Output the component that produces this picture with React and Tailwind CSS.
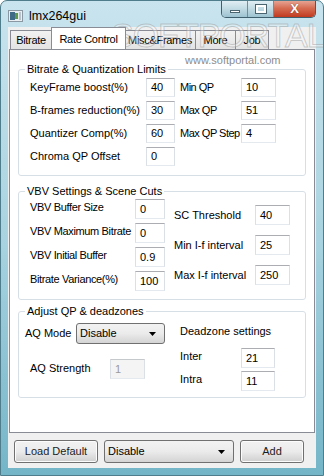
import React from 'react';

const font = { fontFamily: '"Liberation Sans", Arial, sans-serif' };

const Field = ({ value, w = 'w-[29px]', h = 'h-[19px]', disabled }) => (
  <div
    className={`${w} ${h} shrink-0 flex items-center pl-[4px] border border-[#abadb3] border-l-[#dbdfe6] border-r-[#dbdfe6] border-b-[#e3e9ef] ${
      disabled ? 'bg-[#f4f4f4] text-[#9a9a9a] border-[#c6c9cc]' : 'bg-white text-black'
    }`}
  >
    {value}
  </div>
);

const Combo = ({ value, w, h = 'h-[21px]' }) => (
  <div
    className={`${w} ${h} shrink-0 flex items-center justify-between pl-[3px] pr-[8px] rounded-[3px] border border-[#707070] bg-gradient-to-b from-[#f2f2f2] via-[#ebebeb] to-[#d4d4d4]`}
  >
    <span>{value}</span>
    <svg width="7" height="4" viewBox="0 0 7 4">
      <path d="M0 0h7L3.5 4z" fill="#000" />
    </svg>
  </div>
);

const Button = ({ children, w }) => (
  <div
    className={`${w} h-[23px] shrink-0 flex items-center justify-center rounded-[3px] border border-[#707070] bg-gradient-to-b from-[#f2f2f2] via-[#ebebeb] to-[#cfcfcf] text-[#1c1c1c] shadow-[inset_0_0_0_1px_#fcfcfc]`}
  >
    {children}
  </div>
);

const Group = ({ title, className, children }) => (
  <fieldset className={`border border-[#d5dfe5] rounded-[3px] ${className}`}>
    <legend className="ml-[6px] px-[2px] leading-[14px]">{title}</legend>
    {children}
  </fieldset>
);

export default function App() {
  const tabs = [
    ['Bitrate', 'w-[42px]'],
    ['Rate Control', 'w-[75px]'],
    ['Misc&Frames', 'w-[72px]'],
    ['More', 'w-[41px]'],
    ['Job', 'w-[34px]'],
  ];

  return (
    <div
      className="relative w-[324px] h-[476px] overflow-hidden rounded-t-[7px] bg-gradient-to-b from-[#c9e4ee] via-[#a9d3e0] to-[#74b5c8] border border-[#4f7d8b] text-[11px] text-black whitespace-nowrap"
      style={font}
    >
      {/* title bar */}
      <div className="h-[26px] flex items-start">
        <div className="flex items-center pl-[7px] pt-[8px]">
          <svg width="15" height="12" viewBox="0 0 15 12">
            <rect x="0.5" y="0.5" width="14" height="11" fill="#e8eef2" stroke="#8a98a4" />
            <rect x="2" y="2" width="5" height="8" fill="#3f6b86" />
            <rect x="7" y="3" width="3" height="6" fill="#5f9a4a" />
            <rect x="11" y="2" width="2" height="8" fill="#b8c4cc" />
          </svg>
          <span className="ml-[6px] text-[12.5px] leading-[14px]">lmx264gui</span>
        </div>
        <div className="ml-auto mr-[7px] flex h-[18px] -mt-px rounded-b-[5px] border border-t-0 border-[#3f5f6e] overflow-hidden">
          <div className="w-[26px] flex items-center justify-center bg-gradient-to-b from-[#e4f1f5] via-[#c2dbe4] to-[#9cc3d1] border-r border-[#6f8f9c]">
            <div className="w-[10px] h-[3px] mt-[5px] bg-white border border-[#4a6470]" />
          </div>
          <div className="w-[26px] flex items-center justify-center bg-gradient-to-b from-[#e4f1f5] via-[#c2dbe4] to-[#9cc3d1] border-r border-[#6f8f9c]">
            <div className="w-[10px] h-[8px] border-2 border-white outline outline-1 outline-[#4a6470]" />
          </div>
          <div className="w-[41px] flex items-center justify-center bg-gradient-to-b from-[#e7aa9a] via-[#d46a50] to-[#c0391e]">
            <span className="text-white font-bold text-[13px] leading-none [text-shadow:0_0_1px_#5a1a0c]">X</span>
          </div>
        </div>
      </div>

      {/* client area */}
      <div className="mx-[7px] h-[441px] bg-[#f0f0f0] flex flex-col">
        <div className="h-[22px] flex items-end pl-[2px] tracking-[-0.3px]">
          {tabs.map(([t, w], i) =>
            i === 1 ? (
              <div
                key={t}
                className={`${w} h-[22px] -mx-px relative z-10 flex justify-center items-start pt-[3px] bg-white border border-b-0 border-[#898c95]`}
              >
                {t}
              </div>
            ) : (
              <div
                key={t}
                className={`${w} h-[19px] flex justify-center items-center bg-gradient-to-b from-[#f2f2f2] to-[#e3e3e3] border border-b-0 border-[#898c95] -ml-px first:ml-0`}
              >
                {t}
              </div>
            )
          )}
        </div>

        <div className="h-[384px] ml-[1px] mr-[1px] bg-white border border-[#898c95] px-[8px] pt-[12px] flex flex-col">
          <Group title="Bitrate & Quantization Limits" className="pb-[9px]">
            <div className="flex flex-col gap-[4px] pl-[11px] pt-[2px]">
              {[
                ['KeyFrame boost(%)', '40', 'Min QP', '10'],
                ['B-frames reduction(%)', '30', 'Max QP', '51'],
                ['Quantizer Comp(%)', '60', 'Max QP Step', '4'],
                ['Chroma QP Offset', '0'],
              ].map(([a, b, c, d]) => (
                <div key={a} className="flex items-center h-[19px]">
                  <span className="w-[116px] shrink-0">{a}</span>
                  <Field value={b} w="w-[29px]" />
                  {c && (
                    <>
                      <span className="w-[66px] shrink-0 pl-[5px] tracking-[-0.5px]">{c}</span>
                      <Field value={d} w="w-[35px]" />
                    </>
                  )}
                </div>
              ))}
            </div>
          </Group>

          <Group title="VBV Settings & Scene Cuts" className="mt-[8px] pb-[8px]">
            <div className="flex pl-[11px] pt-[1px]">
              <div className="flex flex-col gap-[4px] w-[144px]">
                {[
                  ['VBV Buffer Size', '0'],
                  ['VBV Maximum Bitrate', '0'],
                  ['VBV Initial Buffer', '0.9'],
                  ['Bitrate Variance(%)', '100'],
                ].map(([a, b]) => (
                  <div key={a} className="flex items-center h-[20px]">
                    <span className="w-[105px] shrink-0 pb-[4px] tracking-[-0.35px]">{a}</span>
                    <Field value={b} w="w-[30px]" h="h-[20px]" />
                  </div>
                ))}
              </div>
              <div className="flex flex-col gap-[10px] pt-[6px]">
                {[
                  ['SC Threshold', '40'],
                  ['Min I-f interval', '25'],
                  ['Max I-f interval', '250'],
                ].map(([a, b]) => (
                  <div key={a} className="flex items-center h-[20px]">
                    <span className="w-[81px] shrink-0">{a}</span>
                    <Field value={b} w="w-[35px]" h="h-[20px]" />
                  </div>
                ))}
              </div>
            </div>
          </Group>

          <Group title="Adjust QP & deadzones" className="mt-[4px] pb-[6px]">
            <div className="flex pl-[6px] pt-[5px]">
              <div className="w-[155px] shrink-0">
                <div className="flex items-center h-[21px]">
                  <span className="w-[51px] shrink-0">AQ Mode</span>
                  <Combo value="Disable" w="w-[89px]" />
                </div>
                <div className="flex items-center h-[20px] mt-[15px] pl-[5px]">
                  <span className="w-[80px] shrink-0 pb-[2px]">AQ Strength</span>
                  <Field value="1" w="w-[35px]" h="h-[20px]" disabled />
                </div>
              </div>
              <div className="flex flex-col">
                <span className="leading-[14px] pt-[1px]">Deadzone settings</span>
                <div className="flex flex-col gap-[3px] mt-[10px]">
                  {[
                    ['Inter', '21'],
                    ['Intra', '11'],
                  ].map(([a, b]) => (
                    <div key={a} className="flex items-center h-[20px]">
                      <span className="w-[61px] shrink-0 pb-[3px]">{a}</span>
                      <Field value={b} w="w-[34px]" h="h-[20px]" />
                    </div>
                  ))}
                </div>
              </div>
            </div>
          </Group>
        </div>

        <div className="mt-[7px] pl-[6px] flex items-center">
          <Button w="w-[84px]">Load Default</Button>
          <div className="ml-[6px]">
            <Combo value="Disable" w="w-[130px]" h="h-[23px]" />
          </div>
          <div className="ml-[6px]">
            <Button w="w-[64px]">Add</Button>
          </div>
        </div>
      </div>

      {/* softportal watermark */}
      <div className="pointer-events-none absolute left-[110px] top-[16px] flex flex-col items-center">
        <span className="text-[34px] leading-[36px] tracking-[-1px] text-white/30 [-webkit-text-stroke:1px_rgba(150,150,150,0.45)]">
          SOFTPORTAL
        </span>
        <span className="mt-[1px] ml-[30px] text-[11px] leading-[12px] text-[#8c8c8c]">www.softportal.com</span>
      </div>
    </div>
  );
}
